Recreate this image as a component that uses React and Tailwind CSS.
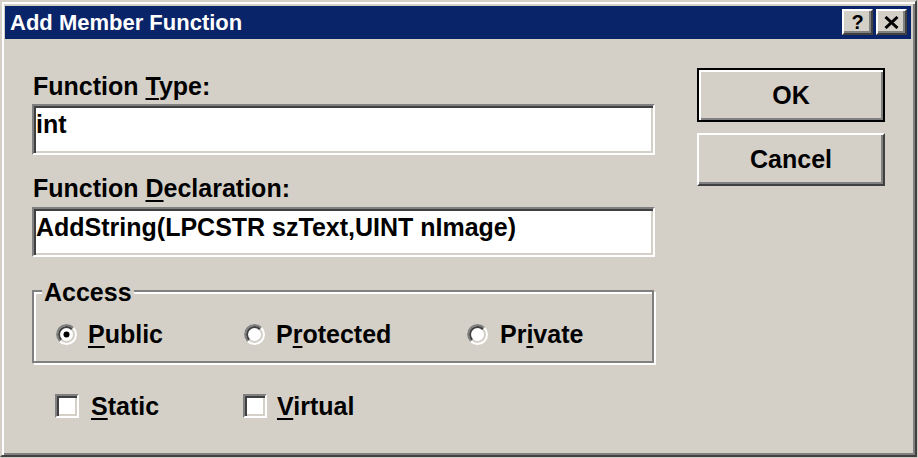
import React from "react";

function Radio({ checked }) {
  return (
    <svg width="21" height="21" viewBox="0 0 21 21" className="shrink-0">
      <circle cx="10.5" cy="10.5" r="10.5" fill="#ffffff" />
      <path d="M3.075 17.925 A10.5 10.5 0 0 1 17.925 3.075 Z" fill="#808080" />
      <circle cx="10.5" cy="10.5" r="8.5" fill="#d4d0c8" />
      <path d="M4.49 16.51 A8.5 8.5 0 0 1 16.51 4.49 Z" fill="#404040" />
      <circle cx="10.5" cy="10.5" r="6.5" fill="#ffffff" />
      {checked && <circle cx="10.5" cy="10.5" r="3" fill="#000000" />}
    </svg>
  );
}

function Check() {
  return (
    <div className="w-[24px] h-[24px] shrink-0 bg-white border-2 border-t-[#808080] border-l-[#808080] border-r-white border-b-white shadow-[inset_2px_2px_0_#404040,inset_-2px_-2px_0_#d4d0c8]" />
  );
}

function U({ children }) {
  return <span className="underline decoration-2 underline-offset-[3px]">{children}</span>;
}

function Field({ children, h }) {
  return (
    <div
      className={`${h} w-full bg-white border-2 border-t-[#808080] border-l-[#808080] border-r-white border-b-white shadow-[inset_2px_2px_0_#404040,inset_-2px_-2px_0_#d4d0c8] pl-[2px] pt-[5px] text-[25px] leading-[26px] whitespace-nowrap`}
    >
      {children}
    </div>
  );
}

export default function App() {
  return (
    <div className="w-[918px] h-[458px] bg-[#d4d0c8] font-['Liberation_Sans',Arial,sans-serif] font-bold text-black">
      <div className="w-[917px] h-[457px] flex flex-col border-2 border-t-[#d4d0c8] border-l-[#d4d0c8] border-r-[#404040] border-b-[#404040] shadow-[inset_2px_2px_0_#ffffff,inset_-2px_-2px_0_#808080] pl-[3px] pr-[4px] pt-[4px]">
        {/* Title bar */}
        <div className="h-[33px] bg-[#0a246a] flex items-center justify-between pl-[5px] pr-[4px]">
          <span className="text-white text-[22px] leading-none pt-[1px]">Add Member Function</span>
          <div className="flex gap-[3px] pb-[1px]">
            <div className="w-[31px] h-[26px] bg-[#d4d0c8] border-2 border-t-white border-l-white border-r-[#404040] border-b-[#404040] shadow-[inset_-2px_-2px_0_#808080] flex items-center justify-center text-[20px] leading-none font-bold">
              ?
            </div>
            <div className="w-[31px] h-[26px] bg-[#d4d0c8] border-2 border-t-white border-l-white border-r-[#404040] border-b-[#404040] shadow-[inset_-2px_-2px_0_#808080] flex items-center justify-center">
              <svg width="15" height="13" viewBox="0 0 15 13">
                <path d="M1.5 1 L13.5 12 M13.5 1 L1.5 12" stroke="#000" strokeWidth="3" />
              </svg>
            </div>
          </div>
        </div>

        {/* Body */}
        <div className="flex flex-row">
          <div className="ml-[27px] w-[623px] flex flex-col">
            <div className="mt-[32px] pl-[1px] text-[25px] leading-[30px]">
              Function <U>T</U>ype:
            </div>
            <div className="mt-[3px]">
              <Field h="h-[51px]">int</Field>
            </div>
            <div className="mt-[18px] pl-[1px] text-[25px] leading-[30px]">
              Function <U>D</U>eclaration:
            </div>
            <div className="mt-[4px]">
              <Field h="h-[50px]">AddString(LPCSTR szText,UINT nImage)</Field>
            </div>

            {/* Access group */}
            <div className="mt-[33px] relative w-[622px] h-[73px] border-2 border-[#808080] shadow-[inset_2px_2px_0_#ffffff,2px_2px_0_#ffffff] pl-[22px] pt-[27px]">
              <span className="absolute left-[8px] top-[-15px] px-[2px] bg-[#d4d0c8] text-[25px] leading-[30px]">
                Access
              </span>
              <div className="flex items-center h-[30px] text-[25px] leading-[30px]">
                <div className="w-[188px] flex items-center gap-[11px]">
                  <Radio checked />
                  <span>
                    <U>P</U>ublic
                  </span>
                </div>
                <div className="w-[223px] flex items-center gap-[11px]">
                  <Radio />
                  <span>
                    P<U>r</U>otected
                  </span>
                </div>
                <div className="flex items-center gap-[12px]">
                  <Radio />
                  <span>
                    Pr<U>i</U>vate
                  </span>
                </div>
              </div>
            </div>

            {/* Checkboxes */}
            <div className="mt-[30px] ml-[23px] h-[25px] flex items-center text-[25px] leading-[30px]">
              <div className="w-[188px] flex items-center gap-[12px]">
                <Check />
                <span>
                  <U>S</U>tatic
                </span>
              </div>
              <div className="flex items-center gap-[10px]">
                <Check />
                <span>
                  <U>V</U>irtual
                </span>
              </div>
            </div>
          </div>

          {/* Buttons */}
          <div className="ml-[42px] w-[188px] flex flex-col">
            <div className="mt-[29px] h-[54px] border-2 border-black bg-[#d4d0c8] shadow-[inset_2px_2px_0_#ffffff,inset_-2px_-2px_0_#808080] flex items-center justify-center text-[25px] leading-none">
              OK
            </div>
            <div className="mt-[11px] h-[53px] border-2 border-t-white border-l-white border-r-[#404040] border-b-[#404040] bg-[#d4d0c8] shadow-[inset_-2px_-2px_0_#808080] flex items-center justify-center text-[25px] leading-none">
              Cancel
            </div>
          </div>
        </div>
      </div>
    </div>
  );
}
